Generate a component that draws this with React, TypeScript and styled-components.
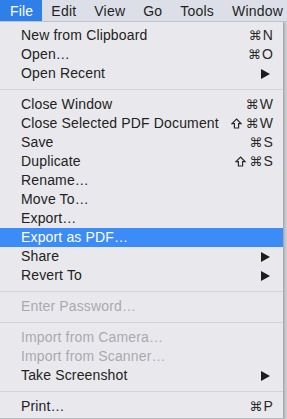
import React from "react";
import styled, { createGlobalStyle } from "styled-components";

const GlobalStyle = createGlobalStyle`
  html, body {
    margin: 0;
    padding: 0;
    background: #cfd0d4;
  }
  body {
    font-family: "Liberation Sans", Arial, "DejaVu Sans", sans-serif;
    -webkit-font-smoothing: antialiased;
  }
`;

const Screen = styled.div`
  width: 287px;
  height: 419px;
  display: flex;
  flex-direction: column;
  overflow: hidden;
  background: #cfd0d4;
`;

const MenuBar = styled.div`
  height: 22px;
  display: flex;
  align-items: stretch;
  background: #dcdfe7;
  border-bottom: 1px solid #c2c4ca;
  box-sizing: border-box;
  flex-shrink: 0;
`;

const BarItem = styled.div<{ $active?: boolean }>`
  display: flex;
  align-items: center;
  padding: 0 9px;
  font-size: 14px;
  letter-spacing: 0.2px;
  white-space: nowrap;
  color: ${({ $active }) => ($active ? "#fff" : "#1f1f1f")};
  background: ${({ $active }) => ($active ? "#2f7fe9" : "transparent")};
  &:first-child {
    padding-left: 10px;
  }
`;

const Menu = styled.div`
  width: 283px;
  display: flex;
  flex-direction: column;
  padding: 4px 0 2px;
  background: #e9e9ed;
  border-right: 1px solid #a9aab0;
  border-bottom: 1px solid #b9bac0;
  box-shadow: 1px 1px 2px rgba(0, 0, 0, 0.15);
`;

const Item = styled.div<{ $selected?: boolean; $disabled?: boolean }>`
  height: 19px;
  display: flex;
  align-items: center;
  justify-content: space-between;
  padding: 0 10px 0 21px;
  font-size: 14px;
  line-height: 19px;
  letter-spacing: 0.15px;
  color: ${({ $selected, $disabled }) =>
    $selected ? "#fff" : $disabled ? "#a9a9ad" : "#222"};
  background: ${({ $selected }) => ($selected ? "#3b8cf6" : "transparent")};
`;

const Shortcut = styled.span`
  display: flex;
  align-items: center;
  gap: 1px;
  font-size: 14px;
  color: #2a2a2a;
`;

const Glyph = styled.span`
  font-family: "DejaVu Sans", sans-serif;
  font-size: 13px;
`;

const Separator = styled.div`
  height: 12px;
  display: flex;
  align-items: center;
  &::after {
    content: "";
    flex: 1;
    height: 1px;
    background: #d2d3d7;
  }
`;

const Arrow = () => (
  <svg width="9" height="10" viewBox="0 0 9 10" style={{ marginRight: 3 }}>
    <path d="M0 0 L9 5 L0 10 Z" fill="#1c1c1c" />
  </svg>
);

const ShiftIcon = () => (
  <svg width="11" height="11" viewBox="0 0 11 11" style={{ marginRight: 2 }}>
    <path
      d="M5.5 1 L10 5.6 H7.6 V10 H3.4 V5.6 H1 Z"
      fill="none"
      stroke="#2a2a2a"
      strokeWidth="1.2"
      strokeLinejoin="miter"
    />
  </svg>
);

type Entry =
  | "sep"
  | {
      label: string;
      keys?: string;
      shift?: boolean;
      sub?: boolean;
      disabled?: boolean;
      selected?: boolean;
    };

const entries: Entry[] = [
  { label: "New from Clipboard", keys: "N" },
  { label: "Open…", keys: "O" },
  { label: "Open Recent", sub: true },
  "sep",
  { label: "Close Window", keys: "W" },
  { label: "Close Selected PDF Document", keys: "W", shift: true },
  { label: "Save", keys: "S" },
  { label: "Duplicate", keys: "S", shift: true },
  { label: "Rename…" },
  { label: "Move To…" },
  { label: "Export…" },
  { label: "Export as PDF…", selected: true },
  { label: "Share", sub: true },
  { label: "Revert To", sub: true },
  "sep",
  { label: "Enter Password…", disabled: true },
  "sep",
  { label: "Import from Camera…", disabled: true },
  { label: "Import from Scanner…", disabled: true },
  { label: "Take Screenshot", sub: true },
  "sep",
  { label: "Print…", keys: "P" },
];

const barItems = ["File", "Edit", "View", "Go", "Tools", "Window"];

export default function App() {
  return (
    <Screen>
      <GlobalStyle />
      <MenuBar>
        {barItems.map((name, i) => (
          <BarItem key={name} $active={i === 0}>
            {name}
          </BarItem>
        ))}
      </MenuBar>
      <Menu>
        {entries.map((e, i) =>
          e === "sep" ? (
            <Separator key={i} />
          ) : (
            <Item key={i} $selected={e.selected} $disabled={e.disabled}>
              <span>{e.label}</span>
              {e.keys && (
                <Shortcut>
                  {e.shift && <ShiftIcon />}
                  <Glyph>⌘</Glyph>
                  {e.keys}
                </Shortcut>
              )}
              {e.sub && <Arrow />}
            </Item>
          )
        )}
      </Menu>
    </Screen>
  );
}
